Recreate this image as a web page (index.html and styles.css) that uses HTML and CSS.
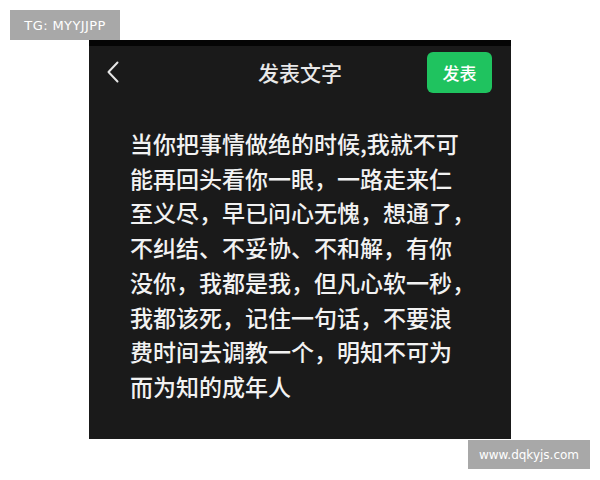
FILE: index.html
```html
<!DOCTYPE html>
<html lang="zh">
<head>
<meta charset="utf-8">
<link rel="stylesheet" href="styles.css">
</head>
<body>
<div class="page">
  <div class="panel">
    <div class="topbar"></div>
    <div class="header">
      <svg class="back" width="14" height="22" viewBox="0 0 14 22"><path d="M11.5 1.5 L2.5 11 L11.5 20.5" fill="none" stroke="#e6e6e6" stroke-width="2" stroke-linecap="round" stroke-linejoin="round"/></svg>
      <div class="title">发表文字</div>
      <div class="btn">发表</div>
    </div>
    <div class="content">当你把事情做绝的时候,我就不可<br>能再回头看你一眼，一路走来仁<br>至义尽，早已问心无愧，想通了，<br>不纠结、不妥协、不和解，有你<br>没你，我都是我，但凡心软一秒，<br>我都该死，记住一句话，不要浪<br>费时间去调教一个，明知不可为<br>而为知的成年人</div>
  </div>
  <div class="wm wm-tl">TG: MYYJJPP</div>
  <div class="wm wm-br">www.dqkyjs.com</div>
</div>
</body>
</html>
```
FILE: styles.css
```css
html, body {
  margin: 0;
  padding: 0;
  background: #ffffff;
}
.page {
  position: relative;
  width: 600px;
  height: 480px;
  overflow: hidden;
  padding-top: 40px;
  box-sizing: border-box;
}
.panel {
  margin-left: 89px;
  width: 422px;
  height: 399px;
  background: #1a1a1a;
  display: flex;
  flex-direction: column;
  font-family: "Noto Sans CJK SC", "Noto Sans", sans-serif;
}
.topbar {
  height: 6px;
  background: #050505;
}
.header {
  height: 52px;
  display: flex;
  align-items: center;
  justify-content: space-between;
  padding: 0 19px 0 17px;
  position: relative;
}
.back {
  display: block;
}
.title {
  position: absolute;
  left: 0;
  right: 0;
  text-align: center;
  font-size: 21px;
  font-weight: 500;
  color: #e9e9e9;
  line-height: 52px;
  pointer-events: none;
}
.btn {
  width: 65px;
  height: 41px;
  border-radius: 6px;
  background: #1fc35f;
  color: #ffffff;
  font-size: 17px;
  font-weight: 500;
  display: flex;
  align-items: center;
  justify-content: center;
}
.content {
  padding: 28px 0 0 41px;
  font-size: 23px;
  font-weight: 500;
  line-height: 34.7px;
  color: #f2f2f2;
  white-space: nowrap;
}
.wm {
  position: absolute;
  background: #a8a8a8;
  color: #ffffff;
  font-family: "DejaVu Sans", "Liberation Sans", sans-serif;
  display: flex;
  align-items: center;
  justify-content: center;
}
.wm-tl {
  left: 10px;
  top: 10px;
  width: 110px;
  height: 30px;
  font-size: 13px;
  letter-spacing: 0.4px;
}
.wm-br {
  left: 468px;
  top: 440px;
  width: 122px;
  height: 29px;
  font-size: 12px;
}
```
